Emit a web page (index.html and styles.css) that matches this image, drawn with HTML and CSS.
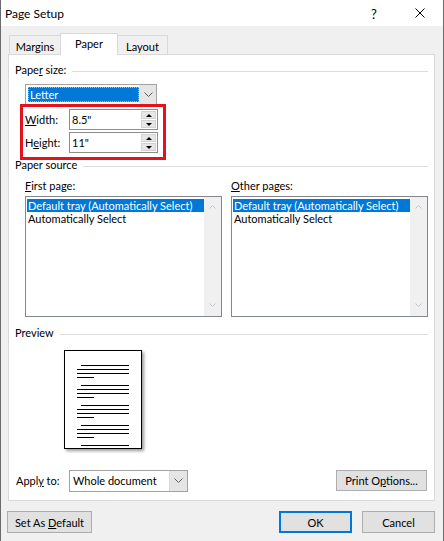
FILE: index.html
```html
<!DOCTYPE html>
<html>
<head>
<meta charset="utf-8">
<title>Page Setup</title>
<link rel="stylesheet" href="styles.css">
</head>
<body>
<div class="dialog">
  <div class="titlebar">
    <span class="title">Page Setup</span>
    <span class="help">?</span>
    <svg class="close" width="10" height="10" viewBox="0 0 10 10"><path d="M0.5 0.5L9.5 9.5M9.5 0.5L0.5 9.5" stroke="#000" stroke-width="1" fill="none"/></svg>
  </div>

  <div class="tabs">
    <div class="tab tab-margins">Margins</div>
    <div class="tab tab-paper active">Paper</div>
    <div class="tab tab-layout">Layout</div>
  </div>

  <div class="panel">
    <div class="group-head"><span class="gh-text">Pape<u>r</u> size:</span><i class="rule"></i></div>

    <div class="combo combo-letter">
      <span class="combo-val"><span class="sel">Letter</span></span>
      <span class="combo-btn"><svg width="9" height="5" viewBox="0 0 9 5"><path d="M0.5 0.5L4.5 4.5L8.5 0.5" stroke="#5f5f5f" fill="none"/></svg></span>
    </div>

    <div class="field field-first">
      <span class="field-label"><u>W</u>idth:</span>
      <div class="spinbox">
        <span class="val">8.5"</span>
        <span class="spin"><span class="sb"><i class="tri-up"></i></span><span class="sb"><i class="tri-dn"></i></span></span>
      </div>
    </div>
    <div class="field">
      <span class="field-label">H<u>e</u>ight:</span>
      <div class="spinbox">
        <span class="val">11"</span>
        <span class="spin"><span class="sb"><i class="tri-up"></i></span><span class="sb"><i class="tri-dn"></i></span></span>
      </div>
    </div>

    <div class="group-head gh-source"><span class="gh-text">Paper source</span><i class="rule"></i></div>

    <div class="sources">
      <div class="src">
        <div class="src-label"><u>F</u>irst page:</div>
        <div class="listbox">
          <div class="items">
            <div class="item selected">Default tray (Automatically Select)</div>
            <div class="item">Automatically Select</div>
          </div>
          <div class="vscroll">
            <svg width="7" height="4" viewBox="0 0 7 4"><path d="M0.5 3.5L3.5 0.5L6.5 3.5" stroke="#c4c4c4" fill="none"/></svg>
            <svg width="7" height="4" viewBox="0 0 7 4"><path d="M0.5 0.5L3.5 3.5L6.5 0.5" stroke="#c4c4c4" fill="none"/></svg>
          </div>
        </div>
      </div>
      <div class="src">
        <div class="src-label"><u>O</u>ther pages:</div>
        <div class="listbox">
          <div class="items">
            <div class="item selected">Default tray (Automatically Select)</div>
            <div class="item">Automatically Select</div>
          </div>
          <div class="vscroll">
            <svg width="7" height="4" viewBox="0 0 7 4"><path d="M0.5 3.5L3.5 0.5L6.5 3.5" stroke="#c4c4c4" fill="none"/></svg>
            <svg width="7" height="4" viewBox="0 0 7 4"><path d="M0.5 0.5L3.5 3.5L6.5 0.5" stroke="#c4c4c4" fill="none"/></svg>
          </div>
        </div>
      </div>
    </div>

    <div class="group-head gh-preview"><span class="gh-text">Preview</span><i class="rule"></i></div>

    <div class="preview">
      <div class="page">
        <svg width="76" height="97" viewBox="0 0 76 97">
          <g fill="#000">
            <rect x="16" y="14" width="48" height="1"/><rect x="12" y="18" width="52" height="1"/><rect x="12" y="22" width="52" height="1"/><rect x="12" y="26" width="17" height="1"/>
            <rect x="16" y="34" width="48" height="1"/><rect x="12" y="38" width="52" height="1"/><rect x="12" y="42" width="52" height="1"/><rect x="12" y="46" width="17" height="1"/>
            <rect x="16" y="54" width="48" height="1"/><rect x="12" y="58" width="52" height="1"/><rect x="12" y="62" width="52" height="1"/><rect x="12" y="66" width="17" height="1"/>
            <rect x="16" y="74" width="48" height="1"/><rect x="12" y="78" width="52" height="1"/><rect x="12" y="82" width="52" height="1"/><rect x="12" y="86" width="17" height="1"/>
            <rect x="16" y="94" width="48" height="1"/>
          </g>
        </svg>
      </div>
    </div>

    <div class="apply-row">
      <span class="apply-label">Appl<u>y</u> to:</span>
      <div class="combo combo-whole">
        <span class="combo-text">Whole document</span>
        <span class="combo-btn"><svg width="9" height="5" viewBox="0 0 9 5"><path d="M0.5 0.5L4.5 4.5L8.5 0.5" stroke="#5f5f5f" fill="none"/></svg></span>
      </div>
      <button class="btn btn-print">Print O<u>p</u>tions...</button>
    </div>

    <div class="redbox"></div>
  </div>

  <div class="footer">
    <button class="btn btn-default">Set As <u>D</u>efault</button>
    <button class="btn btn-ok">OK</button>
    <button class="btn btn-cancel">Cancel</button>
  </div>
</div>
</body>
</html>
```
FILE: styles.css
```css
html, body {
  margin: 0;
  padding: 0;
}
body {
  font-family: Lato, "Liberation Sans", sans-serif;
  font-size: 11px;
  color: #000;
  background: #f0f0f0;
}
u {
  text-decoration: underline;
  text-underline-offset: 1px;
}

.dialog {
  width: 444px;
  height: 541px;
  box-sizing: border-box;
  border-left: 1px solid #6b6b6b;
  border-right: 1px solid #6b6b6b;
  background: #f0f0f0;
  overflow: hidden;
}

/* title bar */
.titlebar {
  height: 26px;
  background: #fff;
  display: flex;
  align-items: center;
  padding-left: 4px;
}
.title {
  font-size: 12px;
  flex: 1;
  padding-top: 1px;
}
.help {
  font-size: 13px;
  width: 8px;
  margin-right: 36px;
  padding-top: 1px;
}
.close {
  display: block;
  margin-right: 18px;
}

/* tabs */
.tabs {
  display: flex;
  align-items: flex-end;
  height: 22px;
  margin-top: 7px;
  margin-bottom: -1px;
  padding-left: 8px;
}
.tab {
  box-sizing: border-box;
  height: 20px;
  border: 1px solid #d9d9d9;
  border-bottom: none;
  background: #f0f0f0;
  display: flex;
  align-items: center;
  justify-content: center;
  padding-top: 1px;
}
.tab-margins { width: 52px; }
.tab-paper { width: 58px; margin-left: -1px; }
.tab-layout { width: 51px; margin-left: -1px; }
.tab.active {
  height: 22px;
  background: #fff;
  position: relative;
  z-index: 2;
  padding-top: 0;
  padding-bottom: 2px;
}

/* panel */
.panel {
  position: relative;
  z-index: 1;
  box-sizing: border-box;
  height: 447px;
  margin: 0 8px 0 7px;
  border: 1px solid #d9d9d9;
  background: #fff;
  padding: 7px 6px 0 6px;
}

.group-head {
  display: flex;
  align-items: flex-start;
  line-height: 15px;
}
.rule {
  flex: 1;
  height: 0;
  border-top: 1px solid #dcdcdc;
  margin-top: 9px;
  margin-left: 6px;
}
.gh-source { margin-top: 4px; }
.gh-preview { margin-top: 8px; }

/* combo */
.combo {
  box-sizing: border-box;
  display: flex;
  border: 1px solid #a2a2a2;
  background: #fff;
}
.combo-letter {
  width: 132px;
  height: 21px;
  margin-top: 7px;
  margin-left: 10px;
}
.combo-val {
  flex: 1;
  padding: 2px 0 2px 2px;
  display: flex;
}
.sel {
  flex: 1;
  background: #0078d7;
  color: #fff;
  line-height: 15px;
  padding-left: 2px;
  outline: 1px dotted #f5b05a;
  outline-offset: -1px;
}
.combo-btn {
  width: 16px;
  background: #e5e5e5;
  border-left: 1px solid #ececec;
  display: flex;
  align-items: center;
  justify-content: center;
}
.combo-btn svg { display: block; }

/* width / height fields */
.field {
  display: flex;
  align-items: center;
  height: 21px;
  margin-top: 2px;
  margin-left: 10px;
}
.field-first { margin-top: 4px; }
.field-label {
  width: 44px;
}
.spinbox {
  box-sizing: border-box;
  width: 89px;
  height: 21px;
  border: 1px solid #8d8d8d;
  display: flex;
  align-items: stretch;
}
.val {
  flex: 1;
  line-height: 19px;
  padding-left: 2px;
}
.spin {
  width: 15px;
  margin: 1px 1px 1px 0;
  display: flex;
  flex-direction: column;
  gap: 1px;
}
.sb {
  flex: 1;
  box-sizing: border-box;
  background: #e6e6e6;
  border: 1px solid #d2d2d2;
  display: flex;
  align-items: center;
  justify-content: center;
}
.tri-up, .tri-dn {
  display: block;
  width: 0;
  height: 0;
  border-left: 3px solid transparent;
  border-right: 3px solid transparent;
}
.tri-up { border-bottom: 3px solid #000; }
.tri-dn { border-top: 3px solid #000; }

/* paper source */
.sources {
  display: grid;
  grid-template-columns: 197px 197px;
  column-gap: 9px;
  margin-top: 6px;
  margin-left: 10px;
}
.src-label {
  line-height: 15px;
}
.listbox {
  box-sizing: border-box;
  height: 121px;
  margin-top: 3px;
  border: 1px solid #828790;
  background: #fff;
  display: flex;
}
.items {
  flex: 1;
  padding: 2px 0 0 1px;
}
.item {
  line-height: 13px;
  height: 13px;
  padding-left: 1px;
  white-space: nowrap;
}
.item.selected {
  background: #0078d7;
  color: #fff;
}
.vscroll {
  width: 17px;
  background: #f0f0f0;
  display: flex;
  flex-direction: column;
  justify-content: space-between;
  align-items: center;
  padding: 8px 0 9px;
  box-sizing: border-box;
}
.vscroll svg { display: block; }

/* preview */
.preview {
  margin-top: 10px;
  margin-left: 49px;
}
.page {
  box-sizing: border-box;
  width: 78px;
  height: 99px;
  border: 1px solid #000;
  background: #fff;
  box-shadow: 2px 2px 3px rgba(0, 0, 0, 0.4);
}
.page svg { display: block; }

/* apply row */
.apply-row {
  display: flex;
  align-items: center;
  margin-top: 21px;
  height: 21px;
}
.apply-label {
  width: 53px;
  margin-left: 1px;
}
.combo-whole {
  width: 119px;
  height: 22px;
}
.combo-text {
  flex: 1;
  line-height: 19px;
  padding-left: 3px;
}
.combo-whole .combo-btn {
  width: 17px;
  border-left: 1px solid #dadada;
}

/* buttons */
.btn {
  box-sizing: border-box;
  font-family: inherit;
  font-size: 11px;
  color: #000;
  background: #e1e1e1;
  border: 1px solid #adadad;
  height: 22px;
  padding: 0;
  margin: 0;
}
.btn-print {
  width: 91px;
  height: 21px;
  margin-left: auto;
  margin-right: 1px;
}

/* red annotation */
.redbox {
  position: absolute;
  left: 11px;
  top: 49px;
  width: 146px;
  height: 56px;
  box-sizing: border-box;
  border: 3px solid #e5121d;
}

/* footer */
.footer {
  display: flex;
  padding: 10px 8px 0 6px;
}
.btn-default { width: 85px; }
.btn-ok {
  width: 73px;
  margin-left: auto;
  border: 2px solid #0078d7;
}
.btn-cancel {
  width: 73px;
  margin-left: 10px;
}
```
